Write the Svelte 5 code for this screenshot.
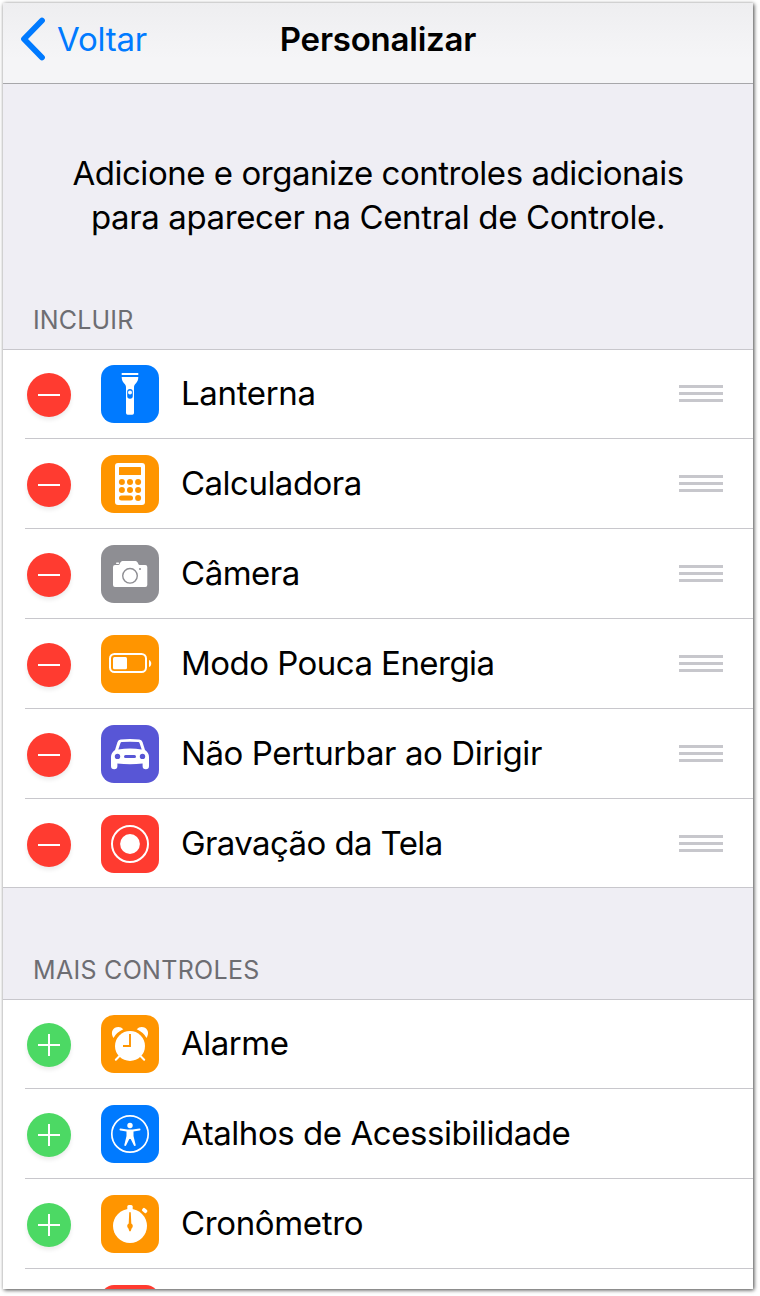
<script lang="ts">
  type Control = {
    name: string;
    icon: string;
    color: string;
    spacing?: number;
  };

  const included: Control[] = [
    { name: 'Lanterna', icon: 'flashlight', color: '#007aff', spacing: -0.35 },
    { name: 'Calculadora', icon: 'calculator', color: '#ff9500', spacing: -0.52 },
    { name: 'Câmera', icon: 'camera', color: '#8e8e93', spacing: -0.48 },
    { name: 'Modo Pouca Energia', icon: 'battery', color: '#ff9500', spacing: -0.54 },
    { name: 'Não Perturbar ao Dirigir', icon: 'car', color: '#5856d6', spacing: -0.4 },
    { name: 'Gravação da Tela', icon: 'record', color: '#ff3b30', spacing: -0.6 },
  ];

  const more: Control[] = [
    { name: 'Alarme', icon: 'alarm', color: '#ff9500', spacing: -0.5 },
    { name: 'Atalhos de Acessibilidade', icon: 'accessibility', color: '#007aff', spacing: -0.44 },
    { name: 'Cronômetro', icon: 'stopwatch', color: '#ff9500', spacing: -0.35 },
    { name: '', icon: '', color: '#ff3b30' },
  ];
</script>

{#snippet glyph(icon: string, color: string)}
  <svg class="tile" viewBox="0 0 58 58" fill="#fff">
    <rect width="58" height="58" rx="13" fill={color} />
    {#if icon === 'flashlight'}
      <path d="M20.700 8h16.600v2H20.700zM20.700 12h16.600c0 3-1 4.600-2.300 6.300C33.500 20 33 20.700 33 22.500V48q0 1.700-1.700 1.700h-4.600Q25 49.700 25 48V22.500c0-1.800-.5-2.500-2-4.200-1.300-1.700-2.300-3.300-2.300-6.300z" />
      <rect x="26.200" y="24" width="5.600" height="9.800" rx="2.800" fill={color} />
      <circle cx="29" cy="27.500" r="2" />
    {:else if icon === 'calculator'}
      <rect x="14" y="8" width="30" height="42" rx="3" />
      <g fill={color}>
        <rect x="18" y="12" width="22" height="8" rx="0.600" />
        {#each [27, 35, 43] as cy}
          {#each [20.9, 29, 37.1] as cx}
            {#if cy < 43 || cx > 30}<circle {cx} {cy} r="3" />{/if}
          {/each}
        {/each}
        <rect x="18" y="40.500" width="14" height="5" rx="2.500" />
      </g>
    {:else if icon === 'camera'}
      <path d="M14 20h3.500c1.500 0 1.500-4 4-4h13c2.500 0 2.500 4 4 4h5.800q2 0 2 2v18q0 2-2 2H14q-2 0-2-2V22q0-2 2-2z" />
      <rect x="15" y="17.500" width="3.200" height="1.500" rx="0.700" />
      <circle cx="29" cy="30.800" r="7.300" fill="none" stroke={color} stroke-width="1.400" />
      <circle cx="39" cy="24" r="1" fill={color} />
    {:else if icon === 'battery'}
      <rect x="9" y="19" width="36" height="18" rx="4.500" fill="none" stroke="#fff" stroke-width="2" />
      <rect x="12" y="22" width="14" height="12.200" rx="1.500" />
      <path d="M48 25c3 1 3 6 0 7z" />
    {:else if icon === 'car'}
      <path fill-rule="evenodd" d="M14 25l2.500-8q.8-2.300 3.200-2.500Q29 13.500 38.300 14.500q2.400.2 3.200 2.500L44 25q4 3 4 7v9a3.200 3.200 0 0 1-6.400 0v-2.500q-12.600 1.300-25.200 0V41a3.200 3.200 0 0 1-6.400 0v-9q0-4 4-7zM17.300 24.500Q29 22.500 40.700 24.500L38.500 18q-.3-.8-1.200-.9Q29 16.300 20.700 17.100q-.9.100-1.200.9z" />
      <circle cx="16.500" cy="31.400" r="2.700" fill={color} />
      <circle cx="41.500" cy="31.400" r="2.700" fill={color} />
      <rect x="23" y="30" width="12" height="3" rx="1.500" fill={color} />
    {:else if icon === 'record'}
      <circle cx="29" cy="29" r="18" fill="none" stroke="#fff" stroke-width="2" />
      <circle cx="29" cy="29" r="9.900" />
    {:else if icon === 'alarm'}
      <path d="M12.500 23C9.500 18.500 11 13.500 15.500 12.300Q19.500 11.300 22.300 14.300Q15.500 17.300 12.500 23zM45.500 23C48.500 18.500 47 13.500 42.500 12.300Q38.500 11.300 35.700 14.300Q42.500 17.300 45.500 23z" />
      <circle cx="29" cy="31" r="15" />
      <path d="M18.500 41l-3.700 3.800M39.500 41l3.700 3.800" stroke="#fff" stroke-width="2" stroke-linecap="round" />
      <path d="M29 19v12h-7" fill="none" stroke={color} stroke-width="1.900" />
    {:else if icon === 'accessibility'}
      <circle cx="29" cy="29" r="18.200" fill="none" stroke="#fff" stroke-width="1.700" />
      <circle cx="29" cy="20.500" r="2.700" />
      <path d="M19.500 23.600l7 .9h5l7-.9q1 0 1 .8t-1 1L32.500 26.500V31l2.200 9q.1.900-.8 1t-1.100-.7L29.700 34h-1.400l-3.100 6.300q-.3.800-1.100.7t-.8-1L25.500 31v-4.500L19.500 25.400q-1-.2-1-1t1-.8z" />
    {:else if icon === 'stopwatch'}
      <circle cx="29" cy="31" r="17" />
      <rect x="26.300" y="10" width="5.400" height="7" rx="1.500" />
      <rect x="41" y="13.700" width="5.400" height="3.700" rx="1.300" transform="rotate(42 43.700 15.500)" />
      <path d="M28.200 18q0-1 .8-1t.8 1l.5 10.500a2.900 2.900 0 0 1 .3 4.900L29.700 36q-.7.800-1.400 0l-.9-2.600a2.900 2.900 0 0 1 .3-4.900z" fill={color} />
    {/if}
  </svg>
{/snippet}

{#snippet row(control: Control, added: boolean)}
  <li>
    <button class="toggle" class:remove={added} aria-label={added ? 'Remover' : 'Adicionar'}>
      <svg viewBox="0 0 44 44" stroke="#fff" stroke-width="2">
        <path d={added ? 'M11 22h22' : 'M11 22h22M22 11v22'} />
      </svg>
    </button>
    {@render glyph(control.icon, control.color)}
    <div class="content">
      <span class="name" style="letter-spacing: {control.spacing ?? 0}px">{control.name}</span>
      {#if added}
        <div class="grip"><i></i><i></i><i></i></div>
      {/if}
    </div>
  </li>
{/snippet}

<div class="page">
  <div class="screen">
    <header>
      <a class="back" href="#voltar">
        <svg viewBox="0 0 26 44"><path d="M22 3.500L4 22l18 18.500" /></svg>
        <span>Voltar</span>
      </a>
      <h1>Personalizar</h1>
    </header>

    <p class="intro">Adicione e organize controles adicionais<br /><span>para aparecer na Central de Controle.</span></p>

    <h2>INCLUIR</h2>
    <ul>
      {#each included as control}
        {@render row(control, true)}
      {/each}
    </ul>

    <h2 class="second">MAIS CONTROLES</h2>
    <ul>
      {#each more as control}
        {@render row(control, false)}
      {/each}
    </ul>
  </div>
</div>

<style>
  :global(body) {
    margin: 0;
    background: #fff;
  }

  .page {
    box-sizing: border-box;
    height: 1296px;
    padding: 3px 0 0 3px;
    overflow: hidden;
  }

  .screen {
    width: 750px;
    height: 1286px;
    overflow: hidden;
    background: #efeef4;
    box-shadow: 1px 1px 4px rgba(0, 0, 0, 0.75);
    color: #000;
    font-family: Inter, Roboto, sans-serif;
  }

  header {
    box-sizing: border-box;
    display: grid;
    grid-template-columns: 1fr auto 1fr;
    align-items: center;
    height: 81px;
    padding: 0 17px 8px;
    border-bottom: 1px solid #a7a7aa;
    background: linear-gradient(#eeeef0, #f5f5f7 70%);
  }

  .back {
    display: flex;
    align-items: center;
    color: #007aff;
    font-size: 33px;
    letter-spacing: -0.2px;
    text-decoration: none;
  }

  .back svg {
    width: 26px;
    height: 44px;
    margin-right: 11px;
    fill: none;
    stroke: #007aff;
    stroke-width: 5.8;
    stroke-linecap: round;
    stroke-linejoin: round;
  }

  h1 {
    margin: 0;
    font-size: 33px;
    font-weight: 600;
    letter-spacing: -0.22px;
  }

  .intro {
    box-sizing: border-box;
    height: 210px;
    margin: 0;
    padding-top: 67px;
    font-size: 33px;
    letter-spacing: -0.46px;
    line-height: 44px;
    text-align: center;
    white-space: nowrap;
  }

  .intro span {
    letter-spacing: -0.38px;
  }

  h2 {
    box-sizing: border-box;
    height: 55px;
    margin: 0;
    padding: 10px 30px 0;
    color: #6d6d72;
    font-size: 25px;
    font-weight: 400;
    letter-spacing: 0.15px;
    line-height: 32px;
  }

  h2.second {
    height: 112px;
    margin-top: -2px;
    padding-top: 66px;
    border-top: 1px solid #c8c7cc;
    background: #efeef4;
    letter-spacing: 0.3px;
  }

  ul {
    margin: 0;
    padding: 0;
    list-style: none;
    background: linear-gradient(#c8c7cc 1px, #fff 1px);
  }

  li {
    display: flex;
    align-items: center;
    height: 90px;
    padding-left: 24px;
    background: linear-gradient(#c8c7cc, #c8c7cc) 22px 89px / 728px 1px no-repeat;
  }

  li:last-child {
    background: none;
  }

  .toggle {
    width: 44px;
    height: 44px;
    margin: 2px 30px 0 0;
    padding: 0;
    border: 0;
    border-radius: 50%;
    background: #4cd964;
    box-shadow: 0 3px 4px rgba(0, 0, 0, 0.08);
  }

  .toggle.remove {
    background: #ff3b30;
  }

  .toggle svg {
    display: block;
  }

  .tile {
    flex: none;
    width: 58px;
    height: 58px;
  }

  .content {
    display: flex;
    flex: 1;
    align-items: center;
    justify-content: space-between;
    margin-top: -2px;
    padding: 0 30px 0 22px;
  }

  .name {
    font-size: 33px;
    line-height: 44px;
    white-space: nowrap;
  }

  .grip {
    display: grid;
    gap: 4px;
    width: 44px;
  }

  .grip i {
    height: 3px;
    background: #c7c7cc;
  }
</style>
